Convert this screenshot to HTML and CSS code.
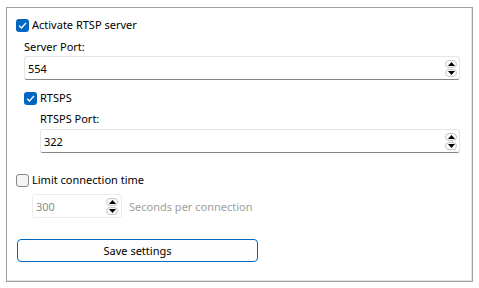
FILE: index.html
```html
<!DOCTYPE html>
<html lang="en">

<head>
  <meta charset="UTF-8">
  <meta name="viewport" content="width=device-width, initial-scale=1.0">
  <title>RTSP settings</title>
  <link rel="stylesheet" href="styles.css">
</head>

<body>
  <div class="frame">
    <label class="check-row">
      <span class="box checked">
        <svg width="9" height="7" viewBox="0 0 9 7"><path d="M1 3.6 L3.4 6 L8 1" fill="none" stroke="#fff" stroke-width="1.3"/></svg>
      </span>
      <span>Activate RTSP server</span>
    </label>

    <div class="group">
      <div class="field-label">Server Port:</div>
      <div class="spin wide">
        <span class="value">554</span>
        <span class="arrows">
          <span class="arrow"><svg width="7" height="4" viewBox="0 0 7 4"><path d="M0 4 L3.5 0 L7 4 Z" fill="#000"/></svg></span>
          <span class="arrow"><svg width="7" height="4" viewBox="0 0 7 4"><path d="M0 0 L3.5 4 L7 0 Z" fill="#000"/></svg></span>
        </span>
      </div>

      <label class="check-row sub">
        <span class="box checked">
          <svg width="9" height="7" viewBox="0 0 9 7"><path d="M1 3.6 L3.4 6 L8 1" fill="none" stroke="#fff" stroke-width="1.3"/></svg>
        </span>
        <span>RTSPS</span>
      </label>

      <div class="group inner">
        <div class="field-label tight">RTSPS Port:</div>
        <div class="spin wide">
          <span class="value">322</span>
          <span class="arrows">
            <span class="arrow"><svg width="7" height="4" viewBox="0 0 7 4"><path d="M0 4 L3.5 0 L7 4 Z" fill="#000"/></svg></span>
            <span class="arrow"><svg width="7" height="4" viewBox="0 0 7 4"><path d="M0 0 L3.5 4 L7 0 Z" fill="#000"/></svg></span>
          </span>
        </div>
      </div>
    </div>

    <label class="check-row limit">
      <span class="box"></span>
      <span>Limit connection time</span>
    </label>

    <div class="timeout-row">
      <div class="spin small disabled">
        <span class="value">300</span>
        <span class="arrows">
          <span class="arrow"><svg width="7" height="4" viewBox="0 0 7 4"><path d="M0 4 L3.5 0 L7 4 Z" fill="#000"/></svg></span>
          <span class="arrow"><svg width="7" height="4" viewBox="0 0 7 4"><path d="M0 0 L3.5 4 L7 0 Z" fill="#000"/></svg></span>
        </span>
      </div>
      <span class="hint">Seconds per connection</span>
    </div>

    <button class="save" type="button">Save settings</button>
  </div>
</body>

</html>
```

FILE: styles.css
```css
body {
  font-family: "Noto Sans", Arial, sans-serif;
  font-size: 11px;
  color: #000;
  margin: 0;
  padding: 0;
  background-color: #fff;
}

.frame {
  margin: 7px 0 0 6px;
  width: 467px;
  height: 275px;
  border: 1px solid #a0a0a0;
  box-shadow: inset -1px -1px 0 #e3e3e3;
  padding: 9px 0 0 9px;
  box-sizing: border-box;
  display: flex;
  flex-direction: column;
  align-items: flex-start;
}

.check-row {
  display: flex;
  align-items: center;
  gap: 3px;
  height: 16px;
  line-height: 16px;
}

.box {
  width: 13px;
  height: 13px;
  box-sizing: border-box;
  border-radius: 3px;
  border: 1px solid #878787;
  background-color: #f4f4f4;
  display: flex;
  align-items: center;
  justify-content: center;
}

.box.checked {
  border: none;
  background-color: #0067c0;
}

.group {
  display: flex;
  flex-direction: column;
  align-items: flex-start;
  padding-left: 8px;
}

.group.inner {
  padding-left: 16px;
}

.field-label {
  height: 16px;
  line-height: 16px;
  margin-top: 6px;
}

.field-label.tight {
  margin-top: 5px;
}

.spin {
  margin-top: 1px;
  height: 24px;
  box-sizing: border-box;
  border: 1px solid #e5e5e5;
  border-bottom-color: #868686;
  border-radius: 3px;
  background-color: #fff;
  display: flex;
  align-items: center;
  justify-content: space-between;
  padding: 0 2px 0 3px;
}

.spin.wide {
  width: 436px;
}

.group.inner .spin.wide {
  width: 420px;
  margin-top: 2px;
}

.arrows {
  display: flex;
  flex-direction: column;
  gap: 1px;
}

.arrow {
  width: 12px;
  height: 8px;
  box-sizing: border-box;
  border: 1px solid #c8c8c8;
  border-radius: 4px;
  display: flex;
  align-items: center;
  justify-content: center;
  background-color: #fafafa;
}

.check-row.sub {
  margin-top: 10px;
}

.check-row.limit {
  margin-top: 19px;
}

.timeout-row {
  margin-top: 6px;
  margin-left: 16px;
  display: flex;
  align-items: center;
  gap: 7px;
}

.spin.small {
  width: 90px;
  margin-top: 0;
  padding-right: 3px;
}

.spin.disabled {
  border-color: #ececec;
  color: #8c8c8c;
}

.hint {
  color: #a0a0a0;
}

.save {
  margin-top: 21px;
  margin-left: 1px;
  width: 241px;
  height: 23px;
  border: 1px solid #0067c0;
  border-radius: 4px;
  background-color: #fdfdfd;
  font-family: inherit;
  font-size: 11px;
  color: #000;
  padding: 0;
}
```
